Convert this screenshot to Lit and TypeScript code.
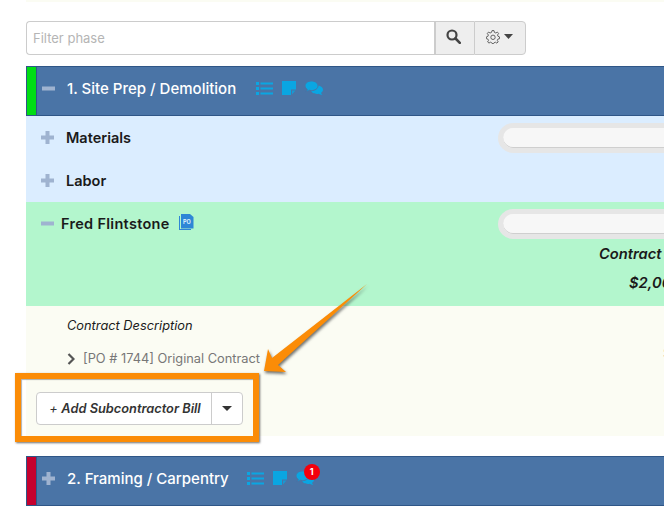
import { LitElement, html, css, svg } from "lit";
import { customElement } from "lit/decorators.js";

const listIcon = html`<svg class="ic" width="17" height="14" viewBox="0 0 17 14"><g fill="#0aa6e2"><rect x="0" y="1" width="3" height="3"/><rect x="0" y="6" width="3" height="3"/><rect x="0" y="11" width="3" height="3"/><rect x="4.500" y="1.500" width="12.500" height="2"/><rect x="4.500" y="6.500" width="12.500" height="2"/><rect x="4.500" y="11.500" width="12.500" height="2"/></g></svg>`;
const noteIcon = html`<svg class="ic" width="14" height="14" viewBox="0 0 14 14"><path fill="#0aa6e2" d="M0 0H14V8.500L9 8.500V14H0Z"/><path fill="#0aa6e2" d="M10 9.500H13.500L10 13.500Z" opacity=".75"/></svg>`;
const chatIcon = html`<svg class="ic" width="18" height="15" viewBox="0 0 18 15"><path fill="#0aa6e2" d="M12 4.500C15.300 4.500 18 6.300 18 8.700C18 10 17.200 11.100 16 11.800C16.200 12.600 16.700 13.400 17.400 14C15.800 13.800 14.600 13.300 13.700 12.700C13.200 12.800 12.600 12.900 12 12.900C8.700 12.900 6 11.100 6 8.700C6 6.300 8.700 4.500 12 4.500Z"/><path fill="#0aa6e2" stroke="#4a74a6" stroke-width="1" d="M6.500 0C2.900 0 0 2 0 4.800C0 6.300 .9 7.600 2.300 8.500C2.100 9.300 1.600 10 .9 10.600C2.400 10.500 3.600 10 4.400 9.300C5.100 9.500 5.800 9.600 6.500 9.600C10.100 9.600 13 7.500 13 4.800C13 2 10.100 0 6.500 0Z"/></svg>`;
const plus = html`<svg class="tog" width="13" height="13" viewBox="0 0 13 13"><path fill="#9fb3d0" d="M4.500 0H8.500V4.500H13V8.500H8.500V13H4.500V8.500H0V4.500H4.500Z"/></svg>`;
const minus = html`<svg class="tog" width="13" height="13" viewBox="0 0 13 13"><rect fill="#9fb3d0" x="0" y="4.500" width="13" height="4"/></svg>`;
const arrow = svg`<path class="arrow" d="M367 284L272 358L268 349L264 371L286 372L278 365Z"/>`;

@customElement("app-root")
export class AppRoot extends LitElement {
  static styles = css`
    :host { display: block; position: relative; width: 664px; height: 512px; overflow: hidden; background: #fff; font-family: Inter, "Open Sans", sans-serif; color: #1a1a1a; }
    .page { padding-left: 26px; width: 900px; box-sizing: border-box; }
    .strip { height: 2px; background: #fbfcf3; margin-bottom: 19px; }
    .filter { display: flex; height: 34px; width: 500px; margin-bottom: 11px; }
    .input { flex: none; width: 408px; box-sizing: border-box; border: 1px solid #ccc; border-right: none; border-radius: 4px 0 0 4px; font-size: 13px; line-height: 32px; padding-left: 6px; color: #b5b5b5; background: #fff; }
    .btn { flex: none; box-sizing: border-box; display: flex; align-items: center; justify-content: center; background: #eee; border: 1px solid #ccc; }
    .search { width: 40px; border-left-width: 2px; border-right: none; padding: 0 4px 3px 0; }
    .gear { width: 52px; border-radius: 0 4px 4px 0; gap: 4px; padding: 0 2px 3px 0; }
    .head { display: flex; align-items: center; height: 50px; box-sizing: border-box; border: 1px solid #2f5687; background: #4a74a6; color: #fff; font-size: 15px; font-weight: 500; }
    .bar { align-self: stretch; width: 9px; flex: none; border-right: 1px solid #2f5687; }
    .bar.green { background: #00dd14; }
    .bar.red { background: #c5002e; }
    .head .tog { margin-left: 5px; margin-right: 12px; }
    .head > .tog, .head > span, .head > .icons { margin-top: -6px; }
    .icons { display: flex; align-items: center; gap: 9px; position: relative; margin-left: 20px; }
    .icons.second { margin-left: 18px; }
    .badge { position: absolute; right: -6px; top: -7px; width: 16px; height: 16px; border-radius: 50%; background: #f4000c; color: #fff; font-size: 9px; font-weight: 700; line-height: 16px; text-align: center; }
    .row { display: flex; position: relative; height: 43px; background: #dbedff; font-size: 14.500px; font-weight: 600; }
    .label { display: flex; align-items: center; height: 43px; gap: 12px; padding-left: 15px; }
    .fred { height: 104px; background: #b3f6cd; display: block; }
    .fred .label { gap: 7px; }
    .fred .label span { letter-spacing: .3px; }
    .po { margin-left: 2px; margin-top: -3px; }
    .pill { position: absolute; left: 472px; top: 7px; width: 300px; height: 30px; box-sizing: border-box; border: 5px solid #e6e6e6; border-radius: 15px; background: #f7f7f7; box-shadow: inset 0 -1px 0 #cfcfcf; }
    .contract { padding-left: 573px; font-style: italic; font-size: 14.700px; font-weight: 600; white-space: nowrap; line-height: 20px; }
    .contract.title { margin-top: -1px; }
    .contract.val { padding-left: 603px; margin-top: 9px; }
    .desc { position: relative; height: 130px; background: #fbfcf3; margin-bottom: 20px; box-sizing: border-box; padding: 11px 0 0 41px; }
    .dt { font-style: italic; font-size: 12.800px; line-height: 18px; }
    .po-row { display: flex; align-items: center; gap: 8px; margin-top: 14px; font-size: 12.800px; color: #777; line-height: 20px; white-space: nowrap; }
    .amt { position: absolute; left: 637px; top: 39px; font-size: 13px; color: #777; }
    .split { position: absolute; left: 10px; top: 86px; display: flex; height: 33px; width: 207px; box-sizing: border-box; border: 1px solid #ccc; border-radius: 4px; background: #fff; font-size: 12.800px; font-style: italic; font-weight: 600; color: #333; }
    .split .main { flex: 1; display: flex; align-items: center; justify-content: center; border-right: 1px solid #ccc; white-space: pre; padding-left: 2px; }
    .split .main i { font-weight: 400; }
    .split .car { flex: none; width: 30px; display: flex; align-items: center; justify-content: center; }
    .box { position: absolute; left: 15px; top: 373px; width: 244px; height: 69px; box-sizing: border-box; border: 6.500px solid #fb8c07; box-shadow: 1px 1px 2px rgba(60,60,60,.75), inset 1px 1px 1px rgba(60,60,60,.4); }
    .ann { position: absolute; left: 0; top: 0; pointer-events: none; }
    .arrow { fill: #fb8c07; filter: drop-shadow(1.500px 2px 1.500px rgba(50,50,50,.7)); }
  `;

  render() {
    return html`
      <div class="page">
        <div class="strip"></div>
        <div class="filter">
          <div class="input">Filter phase</div>
          <div class="btn search">
            <svg width="15" height="15" viewBox="0 0 15 15"><circle cx="6" cy="6" r="4.500" fill="none" stroke="#444" stroke-width="2.200"/><path d="M9.500 9.500L13.800 13.800" stroke="#444" stroke-width="2.600" stroke-linecap="round"/></svg>
          </div>
          <div class="btn gear">
            <svg width="14" height="14" viewBox="0 0 14 14"><path fill="none" stroke="#555" stroke-width=".9" d="M6 .6H8L8.400 2.400L9.800 3L11.400 2.100L12.600 3.500L11.500 5L12 6.300L13.500 6.900V8.700L11.900 9.100L11.300 10.400L12.200 11.900L10.800 13.100L9.400 12.200L8.100 12.700L7.700 13.500H6.100L5.700 12.700L4.400 12.200L3 13.100L1.600 11.900L2.500 10.400L1.900 9.100L.4 8.700V6.900L1.900 6.300L2.400 5L1.300 3.500L2.500 2.100L4.100 3L5.500 2.400Z"/><circle cx="7" cy="7.300" r="2.200" fill="none" stroke="#555" stroke-width=".9"/></svg>
            <svg width="9" height="5" viewBox="0 0 9 5"><path d="M0 0H9L4.500 5Z" fill="#444"/></svg>
          </div>
        </div>
        <div class="head">
          <div class="bar green"></div>${minus}
          <span>1. Site Prep / Demolition</span>
          <div class="icons">${listIcon}${noteIcon}${chatIcon}</div>
        </div>
        <div class="row"><div class="label">${plus}<span>Materials</span></div><div class="pill"></div></div>
        <div class="row"><div class="label">${plus}<span>Labor</span></div></div>
        <div class="row fred">
          <div class="label">${minus}<span>Fred Flintstone</span>
            <svg class="po" width="15" height="16" viewBox="0 0 15 16"><path d="M0 2H1V15H12V16H0Z" fill="#2f86d6"/><path d="M2 0H11L14.500 3V14.500H2Z" fill="#2f86d6"/><text x="4" y="9.500" font-size="5.500" font-weight="700" fill="#dff0ff" font-family="Inter, sans-serif">PO</text></svg>
          </div>
          <div class="pill"></div>
          <div class="contract title">Contract Amount</div>
          <div class="contract val">$2,000.00</div>
        </div>
        <div class="desc">
          <div class="dt">Contract Description</div>
          <div class="po-row">
            <svg width="8" height="12" viewBox="0 0 8 12"><path d="M1.500 1L6.500 6L1.500 11" fill="none" stroke="#555" stroke-width="2.200"/></svg>
            <span>[PO # 1744] Original Contract</span>
          </div>
          <div class="amt">$2,000.00</div>
          <div class="split">
            <div class="main"><i>+ </i>Add Subcontractor Bill</div>
            <div class="car"><svg width="10" height="5" viewBox="0 0 10 5"><path d="M0 0H10L5 5Z" fill="#333"/></svg></div>
          </div>
        </div>
        <div class="head">
          <div class="bar red"></div>${plus}
          <span>2. Framing / Carpentry</span>
          <div class="icons second">${listIcon}${noteIcon}${chatIcon}<div class="badge">1</div></div>
        </div>
      </div>
      <div class="box"></div>
      <svg class="ann" width="664" height="512" viewBox="0 0 664 512">${arrow}</svg>
    `;
  }
}
